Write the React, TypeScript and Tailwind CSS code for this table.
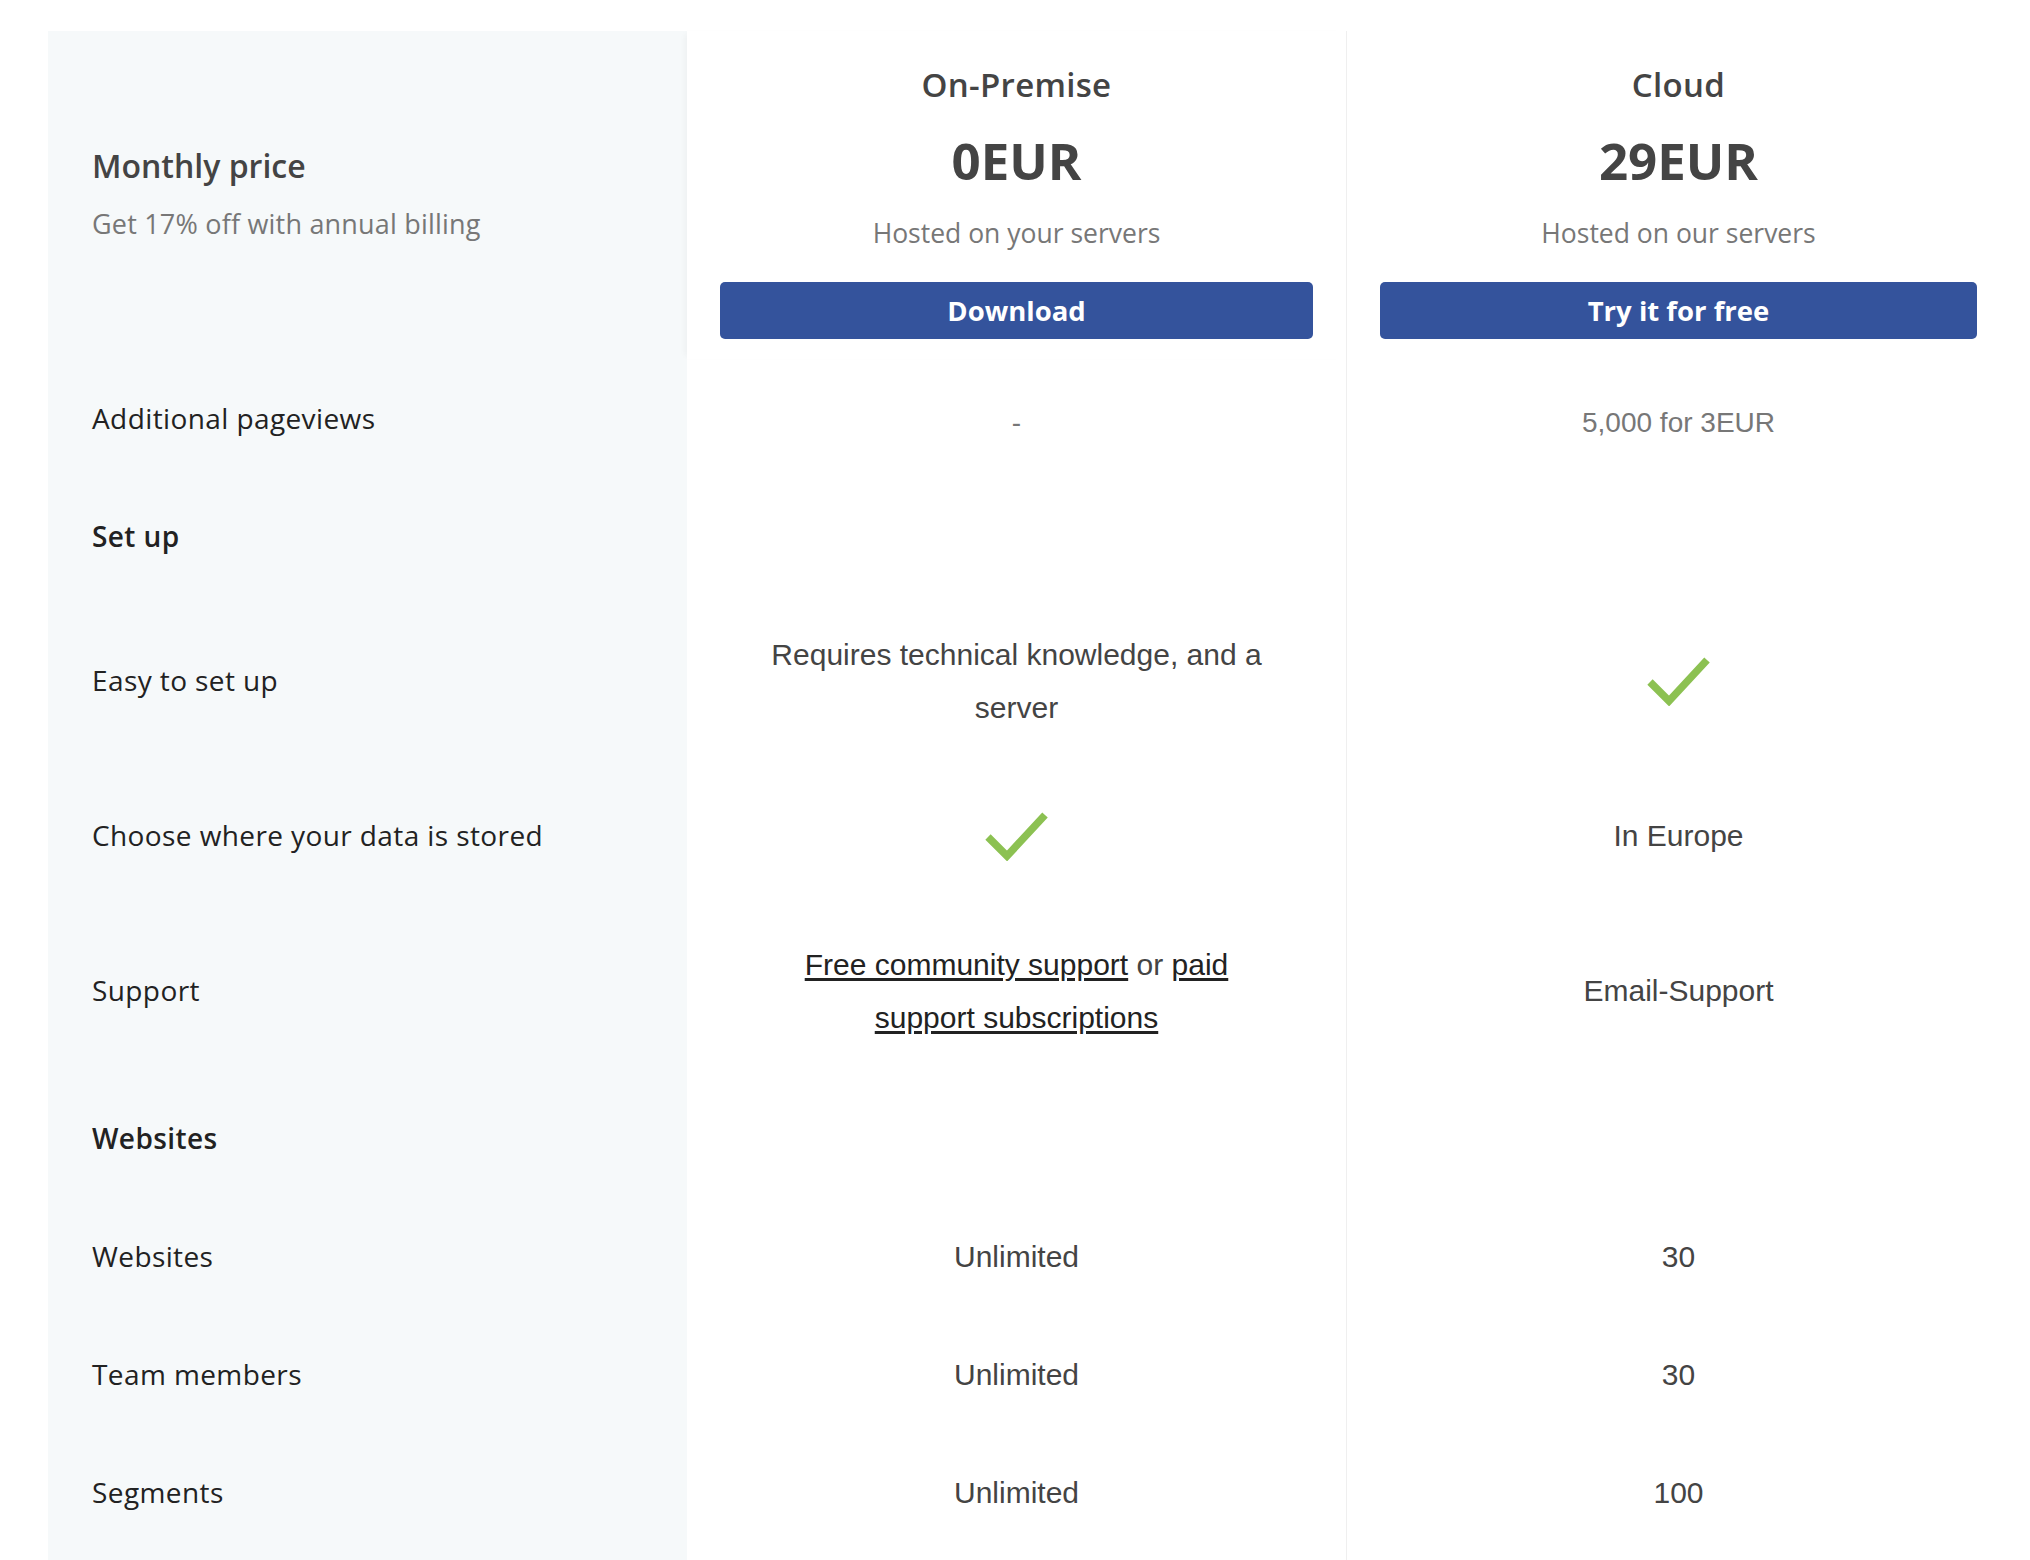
import React from 'react';

type Cell = React.ReactNode;

interface Row {
    label: string;
    section?: boolean;
    onPremise?: Cell;
    cloud?: Cell;
    extra?: string;
}

function Check() {
    return (
        <div className="flex h-[74px] items-center justify-center">
            <svg width="64" height="50" viewBox="0 0 64 50" fill="none">
                <path d="M3 26 L22 45 L60 4" stroke="#8cc152" strokeWidth="7.5" />
            </svg>
        </div>
    );
}

const rows: Row[] = [
    {
        label: 'Additional pageviews',
        onPremise: <span className="text-[28px] text-[#777]">-</span>,
        cloud: <span className="text-[28px] text-[#777]">5,000 for 3EUR</span>,
        extra: 'translate-y-[4px]',
    },
    { label: 'Set up', section: true },
    {
        label: 'Easy to set up',
        onPremise: (
            <span>
                Requires technical knowledge, and a
                <br />
                server
            </span>
        ),
        cloud: <Check />,
    },
    { label: 'Choose where your data is stored', onPremise: <Check />, cloud: 'In Europe' },
    {
        label: 'Support',
        onPremise: (
            <span>
                <a href="#" className="text-[#222] underline underline-offset-[3px]">
                    Free community support
                </a>{' '}
                or{' '}
                <a href="#" className="text-[#222] underline underline-offset-[3px]">
                    paid
                </a>
                <br />
                <a href="#" className="text-[#222] underline underline-offset-[3px]">
                    support subscriptions
                </a>
            </span>
        ),
        cloud: 'Email-Support',
    },
    { label: 'Websites', section: true, extra: 'mt-[3px]' },
    { label: 'Websites', onPremise: 'Unlimited', cloud: '30' },
    { label: 'Team members', onPremise: 'Unlimited', cloud: '30' },
    { label: 'Segments', onPremise: 'Unlimited', cloud: '100' },
];

const labelFont = { fontFamily: '"Open Sans", Lato, sans-serif' };
const valueFont = { fontFamily: '"Liberation Sans", Arial, sans-serif' };

function PlanHeader({ name, price, hosted, cta, first }: { name: string; price: string; hosted: string; cta: string; first?: boolean }) {
    return (
        <div
            className={
                'flex flex-col items-center px-[33px] pt-[32px] pb-[20px] ' +
                (first ? 'shadow-[-5px_0_6px_-3px_rgba(0,0,0,0.04)]' : 'border-l border-[#efefef]')
            }
            style={labelFont}
        >
            <div className="text-[33px] font-semibold leading-[44px] tracking-[0.3px] text-[#444]">{name}</div>
            <div className="mt-[23px] text-[51px] font-bold leading-[60px] text-[#444]">{price}</div>
            <div className="mt-[23px] text-[26.5px] leading-[40px] text-[#777]">{hosted}</div>
            <button className="mt-[29px] h-[57px] w-full rounded-[5px] bg-[#34539c] text-[27.5px] font-bold text-white">
                {cta}
            </button>
        </div>
    );
}

export default function App() {
    return (
        <div className="h-[1560px] w-[2030px] overflow-hidden bg-white">
            <div className="ml-[48px] mt-[31px] grid w-[1962px] grid-cols-[639px_659px_664px]">
                {/* header */}
                <div className="flex flex-col justify-center bg-[#f6f9fa] pb-[2px] pl-[44px]" style={labelFont}>
                    <div className="text-[32px] font-semibold leading-[44px] text-[#444]">Monthly price</div>
                    <div className="mt-[16px] text-[27px] leading-[40px] tracking-[0.2px] text-[#777]">
                        Get 17% off with annual billing
                    </div>
                </div>
                <PlanHeader name="On-Premise" price="0EUR" hosted="Hosted on your servers" cta="Download" first />
                <PlanHeader name="Cloud" price="29EUR" hosted="Hosted on our servers" cta="Try it for free" />

                {rows.map((row, i) => {
                    const shift = row.extra && row.extra.startsWith('mt') ? 'pt-[35.5px]' : 'pt-[32.5px]';
                    const nudge = row.extra && row.extra.startsWith('translate') ? 'translate-y-[4px]' : '';
                    return (
                        <React.Fragment key={i}>
                            <div
                                className={
                                    'flex items-center bg-[#f6f9fa] pb-[32.5px] pl-[44px] text-[28px] leading-[53px] tracking-[0.4px] text-[#222] ' +
                                    shift +
                                    ' ' +
                                    (row.section ? 'font-semibold' : '')
                                }
                                style={labelFont}
                            >
                                {row.label}
                            </div>
                            <div
                                className={
                                    'flex items-center justify-center pb-[32.5px] text-center text-[30px] leading-[53px] text-[#444] ' +
                                    shift +
                                    ' ' +
                                    nudge
                                }
                                style={valueFont}
                            >
                                {row.onPremise}
                            </div>
                            <div className="border-l border-[#efefef]">
                                <div
                                    className={
                                        'flex h-full items-center justify-center pb-[32.5px] text-center text-[30px] leading-[53px] text-[#444] ' +
                                        shift +
                                        ' ' +
                                        nudge
                                    }
                                    style={valueFont}
                                >
                                    {row.cloud}
                                </div>
                            </div>
                        </React.Fragment>
                    );
                })}
                <div className="h-[40px] bg-[#f6f9fa]" />
                <div />
                <div className="border-l border-[#efefef]" />
            </div>
        </div>
    );
}
